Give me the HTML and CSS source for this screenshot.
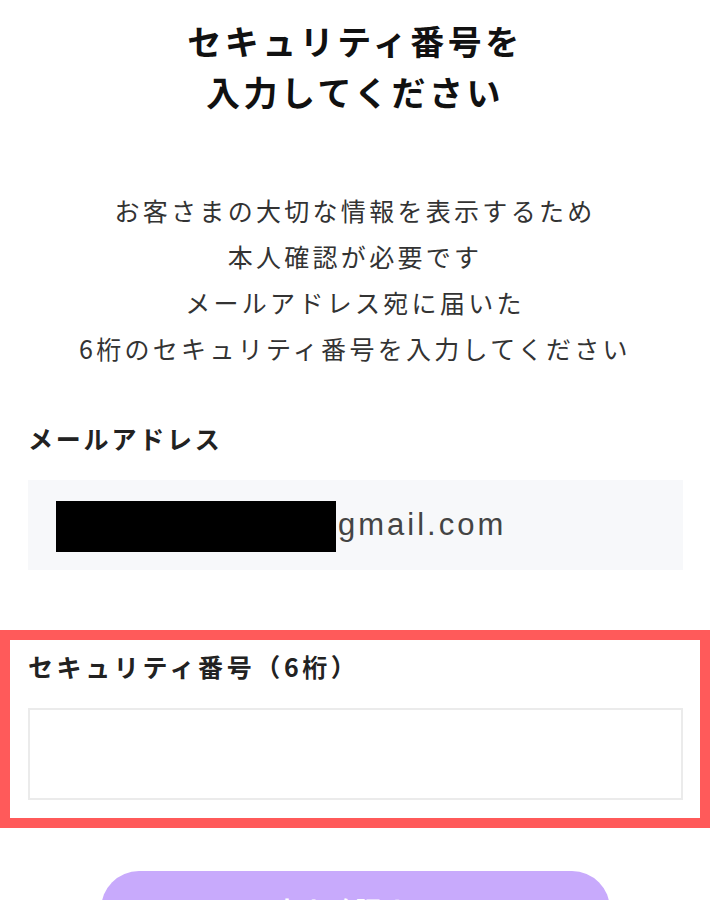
FILE: index.html
```html
<!DOCTYPE html>
<html lang="ja">
<head>
    <meta charset="UTF-8">
    <meta name="viewport" content="width=device-width, initial-scale=1.0">
    <title>セキュリティ番号を入力してください</title>
    <link rel="stylesheet" href="styles.css">
</head>
<body>
    <div class="page">
        <h1 class="title">セキュリティ番号を<br>入力してください</h1>

        <p class="lead">
            お客さまの大切な情報を表示するため<br>
            本人確認が必要です<br>
            メールアドレス宛に届いた<br>
            6桁のセキュリティ番号を入力してください
        </p>

        <!-- メールアドレス -->
        <div class="field">
            <div class="field-label">メールアドレス</div>
            <div class="email-box">
                <span class="redacted"></span><span class="email-domain">gmail.com</span>
            </div>
        </div>

        <!-- セキュリティ番号 -->
        <div class="code-section">
            <label class="field-label field-label-wide" for="codeInput">セキュリティ番号（6桁）</label>
            <input type="text" id="codeInput" class="code-input" inputmode="numeric" maxlength="6">
        </div>

        <div class="actions">
            <button type="button" class="submit-btn" disabled>本人確認する</button>
        </div>
    </div>
</body>
</html>
```

FILE: styles.css
```css
body {
    margin: 0;
    padding: 0;
    background-color: #fff;
    font-family: "Noto Sans CJK JP", "Noto Sans", sans-serif;
    color: #222;
}
.page {
    padding: 15px 0 0;
}
.title {
    margin: 0;
    font-size: 34px;
    line-height: 51px;
    font-weight: 700;
    text-align: center;
    color: #111;
    letter-spacing: 3.5px;
}
.lead {
    margin: 70px 0 0;
    font-size: 25px;
    line-height: 46px;
    text-align: center;
    color: #333;
    letter-spacing: 3.3px;
}
.field {
    margin-top: 47px;
    padding: 0 27px 0 28px;
}
.field-label {
    display: block;
    font-size: 25px;
    line-height: 40px;
    font-weight: 700;
    color: #222;
    letter-spacing: 2.8px;
}
.field-label-wide {
    letter-spacing: 3.6px;
}
.email-box {
    margin-top: 22px;
    height: 90px;
    background-color: #f7f8fa;
    display: flex;
    align-items: center;
    padding-left: 28px;
}
.redacted {
    display: inline-block;
    width: 280px;
    height: 51px;
    background-color: #000;
    margin-top: 2px;
}
.email-domain {
    font-family: "Liberation Sans", Arial, sans-serif;
    font-size: 31px;
    color: #444;
    letter-spacing: 3px;
    margin-left: 2px;
}
.code-section {
    margin-top: 60px;
    border: 10px solid #ff5a5a;
    padding: 6px 17px 18px 18px;
}
.code-input {
    display: block;
    box-sizing: border-box;
    width: 100%;
    height: 92px;
    margin-top: 22px;
    border: 2px solid #ebebeb;
    background-color: #fff;
    font-size: 28px;
    padding: 0 16px;
    outline: none;
}
.actions {
    display: flex;
    justify-content: center;
    margin-top: 43px;
}
.submit-btn {
    width: 509px;
    height: 76px;
    padding: 0;
    border: none;
    border-radius: 38px;
    background-color: #c8aafc;
    color: #fff;
    font-family: "Noto Sans CJK JP", sans-serif;
    font-size: 26px;
    font-weight: 700;
    letter-spacing: 1px;
    cursor: default;
}
```
